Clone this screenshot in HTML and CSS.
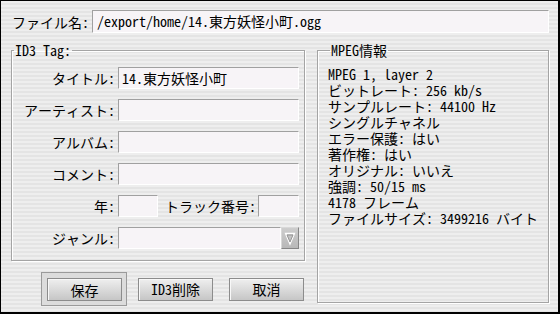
FILE: index.html
```html
<!DOCTYPE html>
<html lang="ja">
<head>
<meta charset="utf-8">
<link rel="stylesheet" href="styles.css">
</head>
<body>
<div class="window">
  <div class="file-row">
    <span class="file-label">ファイル名:</span>
    <div class="field file-field">/export/home/14.東方妖怪小町.ogg</div>
  </div>
  <div class="main">
    <div class="left-col">
      <fieldset class="group id3">
        <legend>ID3 Tag:</legend>
        <div class="form">
          <label class="lbl">タイトル:</label>
          <div class="field">14.東方妖怪小町</div>
          <label class="lbl">アーティスト:</label>
          <div class="field"></div>
          <label class="lbl">アルバム:</label>
          <div class="field"></div>
          <label class="lbl">コメント:</label>
          <div class="field"></div>
          <label class="lbl">年:</label>
          <div class="year-row">
            <div class="field small-field"></div>
            <span class="track-label">トラック番号:</span>
            <div class="field small-field track-field"></div>
          </div>
          <label class="lbl">ジャンル:</label>
          <div class="combo">
            <div class="field combo-field"></div>
            <div class="combo-btn">
              <svg width="16" height="20" viewBox="0 0 16 20">
                <polygon points="3.5,5.5 12.5,5.5 8,16" fill="none" stroke="#ffffff" stroke-width="1.3"/>
                <polygon points="5,7 11,7 8,14" fill="none" stroke="#8e8e8e" stroke-width="0.9"/>
              </svg>
            </div>
          </div>
        </div>
      </fieldset>
      <div class="buttons">
        <div class="default-frame"><button class="btn">保存</button></div>
        <button class="btn">ID3削除</button>
        <button class="btn">取消</button>
      </div>
    </div>
    <fieldset class="group mpeg">
      <legend>MPEG情報</legend>
      <div class="info">
        <div>MPEG 1, layer 2</div>
        <div>ビットレート: 256 kb/s</div>
        <div>サンプルレート: 44100 Hz</div>
        <div>シングルチャネル</div>
        <div>エラー保護: はい</div>
        <div>著作権: はい</div>
        <div>オリジナル: いいえ</div>
        <div>強調: 50/15 ms</div>
        <div>4178 フレーム</div>
        <div>ファイルサイズ: 3499216 バイト</div>
      </div>
    </fieldset>
  </div>
</div>
</body>
</html>
```
FILE: styles.css
```css
* { box-sizing: border-box; }
html, body { margin: 0; padding: 0; }
body {
  width: 560px;
  height: 314px;
  font-family: "Noto Sans Mono CJK JP", "Noto Sans CJK JP", monospace;
  font-size: 14px;
  line-height: 16px;
  color: #000;
}
.window {
  width: 560px;
  height: 314px;
  border-style: solid;
  border-color: #000;
  border-width: 1px 2px 2px 1px;
  background: repeating-linear-gradient(to bottom, #eeeeee 0px, #eeeeee 2px, #e4e4e4 2px, #e4e4e4 4px);
  padding: 9px 8px 0 10px;
}
.file-row {
  display: flex;
  align-items: center;
  height: 23px;
}
.file-label {
  width: 81px;
  padding-left: 1px;
}
.field {
  background: #f7f4f7;
  border-style: solid;
  border-width: 1px;
  border-color: #a0a0a0 #ffffff #ffffff #a0a0a0;
  height: 22px;
  padding: 2px 3px;
  white-space: nowrap;
  overflow: hidden;
}
.file-field {
  width: 457px;
  height: 23px;
  padding-left: 4px;
}
.main {
  display: flex;
  gap: 12px;
  margin-top: 9px;
}
.left-col {
  display: flex;
  flex-direction: column;
}
.group {
  margin: 0;
  border: 1px solid #a4a4a4;
  box-shadow: inset 1px 1px 0 #ffffff, 1px 1px 0 #ffffff;
}
.group legend {
  padding: 0 1px;
  margin-left: 2px;
  line-height: 16px;
}
.id3 {
  width: 294px;
  height: 219px;
  padding: 9px 4px 0 0;
}
.form {
  display: grid;
  grid-template-columns: 103px 181px;
  column-gap: 3px;
  row-gap: 10px;
}
.lbl {
  text-align: right;
  line-height: 22px;
  white-space: nowrap;
}
.year-row {
  display: flex;
  align-items: center;
}
.small-field { width: 40px; }
.track-label { margin-left: 7px; line-height: 22px; }
.track-field { margin-left: auto; width: 41px; }
.combo { display: flex; }
.combo-field { flex: 1; }
.combo-btn {
  width: 18px;
  height: 22px;
  background: linear-gradient(to bottom, #cdcdcd, #b8b8b8);
  border: 1px solid #8a8a8a;
  border-color: #d8d8d8 #868686 #868686 #d8d8d8;
  display: flex;
  align-items: center;
  justify-content: center;
}
.combo-btn svg { display: block; }
.buttons {
  display: flex;
  align-items: center;
  gap: 11px;
  margin-top: 11px;
  padding-left: 30px;
}
.buttons .btn + .btn { margin-left: 5px; }
.default-frame {
  border: 1px solid #9a9a9a;
  background: #dcdcdc;
  padding: 5px 4px 4px 5px;
  height: 34px;
  width: 86px;
}
.btn {
  font-family: inherit;
  font-size: 14px;
  color: #000;
  width: 75px;
  height: 23px;
  margin: 0;
  padding: 0;
  border: 1px solid #8c8c8c;
  background: linear-gradient(to bottom, #efefef, #c6c6c6);
  box-shadow: inset 1px 1px 0 #f8f8f8;
  line-height: 20px;
}
.mpeg {
  width: 232px;
  height: 261px;
  padding: 8px 4px 0 10px;
}
.info div {
  line-height: 16px;
  white-space: nowrap;
}
```
